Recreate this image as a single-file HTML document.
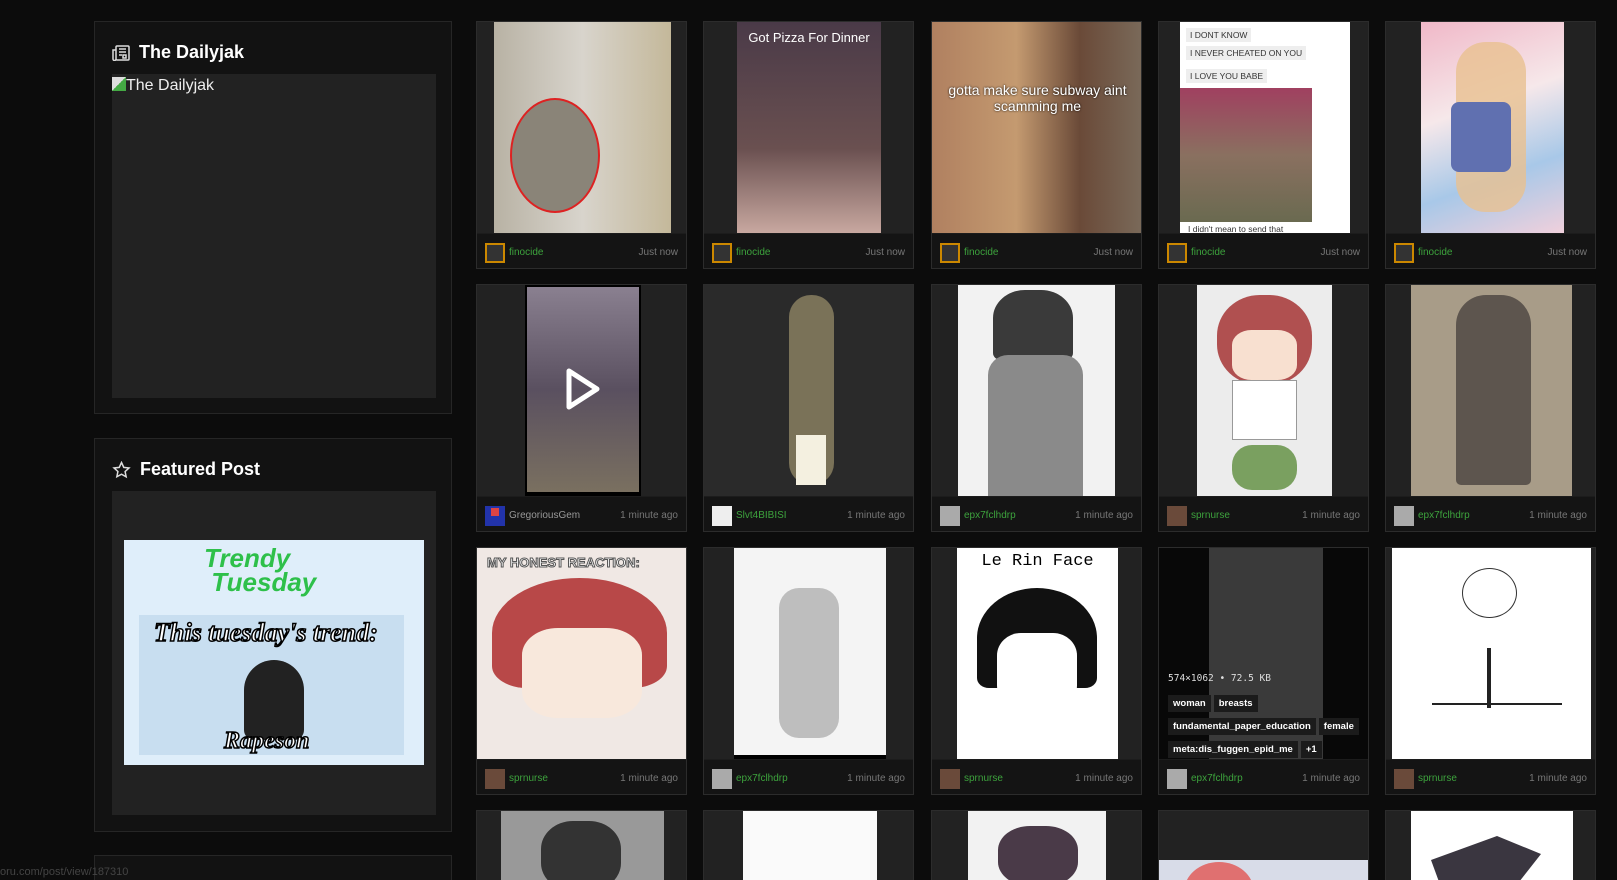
<!DOCTYPE html>
<html style="width:1617px;height:880px;overflow:hidden"><head><meta charset="utf-8"><style>
*{margin:0;padding:0;box-sizing:border-box}
html,body{width:1617px;height:880px;overflow:hidden}
body{background:#0c0c0c;font-family:"Liberation Sans","DejaVu Sans",sans-serif;position:relative;color:#eee}
.box{position:absolute;left:94px;width:358px;background:#121212;border:1px solid #262626}
.box h2{position:absolute;left:17px;font-size:18px;font-weight:bold;color:#fff;display:flex;align-items:center;gap:9px}
.inner{position:absolute;left:17px;width:324px;background:#222}
.card{position:absolute;width:211px;height:248px;background:#222;border:1px solid #2c2c2c;overflow:hidden}
.card .img{position:absolute;top:0}
.card .ft{position:absolute;left:0;right:0;top:211px;height:37px;background:#141414;border-top:1px solid #1c1c1c;font-size:10px}
.av{position:absolute;left:8px;top:9px;width:20px;height:20px}
.un{position:absolute;left:32px;top:13px;color:#3da33d}
.tm{position:absolute;right:8px;top:13px;color:#777}
.tag{display:inline-block;background:#1b1b1b;color:#fff;font-size:9.5px;font-weight:bold;padding:3px 5px;margin:0 3px 4px 0}
.r4{height:70px;border-bottom:none}
</style></head><body>

<div class="box" style="top:21px;height:393px">
 <h2 style="top:20px"><svg width="18" height="16" viewBox="0 0 18 16" fill="none" stroke="#ddd" stroke-width="1.5"><rect x="4" y="1" width="13" height="14" rx="1"/><path d="M4 5H1v9a1.5 1.5 0 003 0M7 4h7M7 7h7M7 10h3M11 10h3v3h-3z"/></svg>The Dailyjak</h2>
 <div class="inner" style="top:52px;height:324px"><span style="position:absolute;left:0;top:3px;font-size:16px;color:#eee"><span style="display:inline-block;width:14px;height:14px;background:linear-gradient(135deg,#ddd 50%,#4a4 50%);vertical-align:-1px"></span>The Dailyjak</span></div>
</div>

<div class="box" style="top:438px;height:394px">
 <h2 style="top:20px"><svg width="19" height="18" viewBox="0 0 24 24" fill="none" stroke="#ddd" stroke-width="2"><path d="M12 2l3 6.5 7 .8-5.2 4.8 1.4 7L12 17.6 5.8 21l1.4-7L2 9.3l7-.8z"/></svg>Featured Post</h2>
 <div class="inner" style="top:52px;height:324px">
  <div style="position:absolute;left:12px;top:49px;width:300px;height:225px;background:#dfeefa">
   <div style="position:absolute;left:15px;top:75px;width:265px;height:140px;background:#c8def0"></div>
   <div style="position:absolute;left:80px;top:6px;font:bold italic 26px 'Liberation Sans';color:#2ec04a;line-height:24px">Trendy<br>&nbsp;Tuesday</div>
   <div style="position:absolute;left:30px;top:78px;font:bold italic 26px 'Liberation Serif';color:#fff;-webkit-text-stroke:1.5px #000">This tuesday's trend:</div>
   <div style="position:absolute;left:120px;top:120px;width:60px;height:80px;background:#222;border-radius:30px 30px 10px 10px"></div>
   <div style="position:absolute;left:100px;top:188px;font:bold italic 24px 'Liberation Serif';color:#fff;-webkit-text-stroke:1.5px #000">Rapeson</div>
  </div>
 </div>
</div>
<div class="box" style="top:855px;height:25px;border-bottom:none"></div>
<div style="position:absolute;left:0;top:866px;font-size:11px;color:#444">oru.com/post/view/187310</div>

<!-- Row 1 -->
<div class="card" style="left:476px;top:21px"><div class="img" style="left:17px;width:177px;height:211px;background:linear-gradient(90deg,#b8b2a4,#d8d4cc 50%,#c4b89a)"><div style="position:absolute;left:16px;top:76px;width:90px;height:115px;border:2px solid #d22;border-radius:50%;background:#8a8478"></div></div>
 <div class="ft"><div class="av" style="background:#333;border:2px solid #c80"></div><span class="un">finocide</span><span class="tm">Just now</span></div></div>
<div class="card" style="left:703px;top:21px"><div class="img" style="left:33px;width:144px;height:211px;background:linear-gradient(#4a3a48,#6a5050 60%,#c8a8a0)"><div style="text-align:center;font-size:13px;color:#fff;margin-top:8px">Got Pizza For Dinner</div></div>
 <div class="ft"><div class="av" style="background:#333;border:2px solid #c80"></div><span class="un">finocide</span><span class="tm">Just now</span></div></div>
<div class="card" style="left:931px;top:21px"><div class="img" style="left:0;width:211px;height:211px;background:linear-gradient(90deg,#b08060,#c49a70 40%,#6a4a38 70%,#7a6a5a)"><div style="text-align:center;font-size:14px;color:#fff;margin-top:60px;text-shadow:0 0 2px #000">gotta make sure subway aint<br>scamming me</div></div>
 <div class="ft"><div class="av" style="background:#333;border:2px solid #c80"></div><span class="un">finocide</span><span class="tm">Just now</span></div></div>
<div class="card" style="left:1158px;top:21px"><div class="img" style="left:21px;width:170px;height:211px;background:#fff;font-size:8.5px;color:#333"><div style="position:absolute;left:6px;top:6px;background:#eee;padding:2px 4px">I DONT KNOW</div><div style="position:absolute;left:6px;top:24px;background:#eee;padding:2px 4px">I NEVER CHEATED ON YOU</div><div style="position:absolute;left:6px;top:47px;background:#eee;padding:2px 4px">I LOVE YOU BABE</div><div style="position:absolute;left:0;top:66px;width:132px;height:134px;background:linear-gradient(#a04060,#8a7060 50%,#6a6a50)"></div><div style="position:absolute;left:8px;top:202px">I didn't mean to send that</div></div>
 <div class="ft"><div class="av" style="background:#333;border:2px solid #c80"></div><span class="un">finocide</span><span class="tm">Just now</span></div></div>
<div class="card" style="left:1385px;top:21px"><div class="img" style="left:35px;width:143px;height:211px;background:linear-gradient(160deg,#f0b8c8,#f6e8ea 40%,#a8c8e8 70%,#f0d0dc)"><div style="position:absolute;left:35px;top:20px;width:70px;height:170px;background:#e8c090;border-radius:30px;opacity:.8"></div><div style="position:absolute;left:30px;top:80px;width:60px;height:70px;background:#6070b0;border-radius:8px"></div></div>
 <div class="ft"><div class="av" style="background:#333;border:2px solid #c80"></div><span class="un">finocide</span><span class="tm">Just now</span></div></div>

<!-- Row 2 -->
<div class="card" style="left:476px;top:284px"><div class="img" style="left:48px;width:116px;height:211px;background:#000;padding:2px"><div style="width:112px;height:205px;background:linear-gradient(#8a8090,#5a5060 50%,#7a7060)"></div><svg style="position:absolute;left:38px;top:82px" width="40" height="44" viewBox="0 0 40 44"><path d="M6 4L34 22 6 40z" fill="none" stroke="#fff" stroke-width="5" stroke-linejoin="round"/></svg></div>
 <div class="ft"><div class="av" style="background:#2233aa"><div style="width:8px;height:8px;margin:2px auto;background:#d44"></div></div><span class="un" style="color:#999">GregoriousGem</span><span class="tm">1 minute ago</span></div></div>
<div class="card" style="left:703px;top:284px"><div class="img" style="left:0;width:211px;height:211px;background:#2a2a2a"><div style="position:absolute;left:85px;top:10px;width:45px;height:190px;background:#7a7258;border-radius:22px"></div><div style="position:absolute;left:92px;top:150px;width:30px;height:50px;background:#f4f0e0"></div></div>
 <div class="ft"><div class="av" style="background:#eee"></div><span class="un">Slvt4BIBISI</span><span class="tm">1 minute ago</span></div></div>
<div class="card" style="left:931px;top:284px"><div class="img" style="left:26px;width:157px;height:211px;background:#f2f2f2"><div style="position:absolute;left:35px;top:5px;width:80px;height:70px;background:#3a3a3a;border-radius:40% 40% 10% 10%"></div><div style="position:absolute;left:30px;top:70px;width:95px;height:141px;background:#8a8a8a;border-radius:20px 20px 0 0"></div></div>
 <div class="ft"><div class="av" style="background:#aaa"></div><span class="un">epx7fclhdrp</span><span class="tm">1 minute ago</span></div></div>
<div class="card" style="left:1158px;top:284px"><div class="img" style="left:38px;width:135px;height:211px;background:#ececec"><div style="position:absolute;left:20px;top:10px;width:95px;height:90px;background:#b05050;border-radius:45%"></div><div style="position:absolute;left:35px;top:45px;width:65px;height:50px;background:#f8e0d0;border-radius:30%"></div><div style="position:absolute;left:35px;top:95px;width:65px;height:60px;background:#fff;border:1px solid #999"></div><div style="position:absolute;left:35px;top:160px;width:65px;height:45px;background:#7aa060;border-radius:20px"></div></div>
 <div class="ft"><div class="av" style="background:#6a4a3a"></div><span class="un">sprnurse</span><span class="tm">1 minute ago</span></div></div>
<div class="card" style="left:1385px;top:284px"><div class="img" style="left:25px;width:161px;height:211px;background:#a89c88"><div style="position:absolute;left:45px;top:10px;width:75px;height:190px;background:#4a4440;border-radius:30px 30px 5px 5px;opacity:.8"></div></div>
 <div class="ft"><div class="av" style="background:#aaa"></div><span class="un">epx7fclhdrp</span><span class="tm">1 minute ago</span></div></div>

<!-- Row 3 -->
<div class="card" style="left:476px;top:547px"><div class="img" style="left:0;width:211px;height:211px;background:#f0e8e4"><div style="position:absolute;left:10px;top:7px;font:bold 13px 'Liberation Sans';color:#fff;-webkit-text-stroke:1px #555">MY HONEST REACTION:</div><div style="position:absolute;left:15px;top:30px;width:175px;height:110px;background:#b84848;border-radius:50% 50% 20% 20%"></div><div style="position:absolute;left:45px;top:80px;width:120px;height:90px;background:#f8e8dc;border-radius:30%"></div></div>
 <div class="ft"><div class="av" style="background:#6a4a3a"></div><span class="un">sprnurse</span><span class="tm">1 minute ago</span></div></div>
<div class="card" style="left:703px;top:547px"><div class="img" style="left:30px;width:152px;height:211px;background:#f4f4f4;border-bottom:4px solid #000"><div style="position:absolute;left:45px;top:40px;width:60px;height:150px;background:#999;border-radius:20px;opacity:.6"></div></div>
 <div class="ft"><div class="av" style="background:#aaa"></div><span class="un">epx7fclhdrp</span><span class="tm">1 minute ago</span></div></div>
<div class="card" style="left:931px;top:547px"><div class="img" style="left:25px;width:161px;height:211px;background:#fff"><div style="text-align:center;font:17px 'Liberation Mono';color:#000;margin-top:4px">Le Rin Face</div><div style="position:absolute;left:20px;top:40px;width:120px;height:100px;background:#111;border-radius:50% 50% 10% 10%"></div><div style="position:absolute;left:40px;top:85px;width:80px;height:75px;background:#fff;border-radius:30%"></div></div>
 <div class="ft"><div class="av" style="background:#6a4a3a"></div><span class="un">sprnurse</span><span class="tm">1 minute ago</span></div></div>
<div class="card" style="left:1158px;top:547px;background:#080808"><div class="img" style="left:50px;width:114px;height:211px;background:#3a3a3a"></div>
 <div style="position:absolute;left:9px;top:125px;font:9.5px 'DejaVu Sans Mono',monospace;color:#ddd">574×1062 • 72.5 KB</div>
 <div style="position:absolute;left:9px;top:145px;width:200px"><span class="tag">woman</span><span class="tag">breasts</span><br><span class="tag">fundamental_paper_education</span><span class="tag">female</span><br><span class="tag">meta:dis_fuggen_epid_me</span><span class="tag">+1</span></div>
 <div class="ft"><div class="av" style="background:#aaa"></div><span class="un">epx7fclhdrp</span><span class="tm">1 minute ago</span></div></div>
<div class="card" style="left:1385px;top:547px"><div class="img" style="left:6px;width:199px;height:211px;background:#fff"><div style="position:absolute;left:70px;top:20px;width:55px;height:50px;border:1.5px solid #333;border-radius:50%"></div><div style="position:absolute;left:95px;top:100px;width:4px;height:60px;background:#222"></div><div style="position:absolute;left:40px;top:155px;width:130px;height:1.5px;background:#222"></div></div>
 <div class="ft"><div class="av" style="background:#6a4a3a"></div><span class="un">sprnurse</span><span class="tm">1 minute ago</span></div></div>

<!-- Row 4 -->
<div class="card r4" style="left:476px;top:810px"><div class="img" style="left:24px;width:163px;height:211px;background:#999"><div style="position:absolute;left:40px;top:10px;width:80px;height:70px;background:#333;border-radius:40%"></div></div></div>
<div class="card r4" style="left:703px;top:810px"><div class="img" style="left:39px;width:134px;height:211px;background:#fafafa"></div></div>
<div class="card r4" style="left:931px;top:810px"><div class="img" style="left:36px;width:138px;height:211px;background:#f2f2f2"><div style="position:absolute;left:30px;top:15px;width:80px;height:60px;background:#4a3a48;border-radius:40%"></div></div></div>
<div class="card r4" style="left:1158px;top:810px"><div class="img" style="left:0;top:49px;width:211px;height:162px;background:#d8dce8"><div style="position:absolute;left:25px;top:2px;width:70px;height:60px;background:#e07070;border-radius:50%"></div></div></div>
<div class="card r4" style="left:1385px;top:810px"><div class="img" style="left:25px;width:162px;height:211px;background:#fff"><div style="position:absolute;left:20px;top:25px;width:110px;height:60px;background:#3a3640;clip-path:polygon(0 40%,60% 0,100% 30%,70% 100%,10% 90%)"></div></div></div>

</body></html>
